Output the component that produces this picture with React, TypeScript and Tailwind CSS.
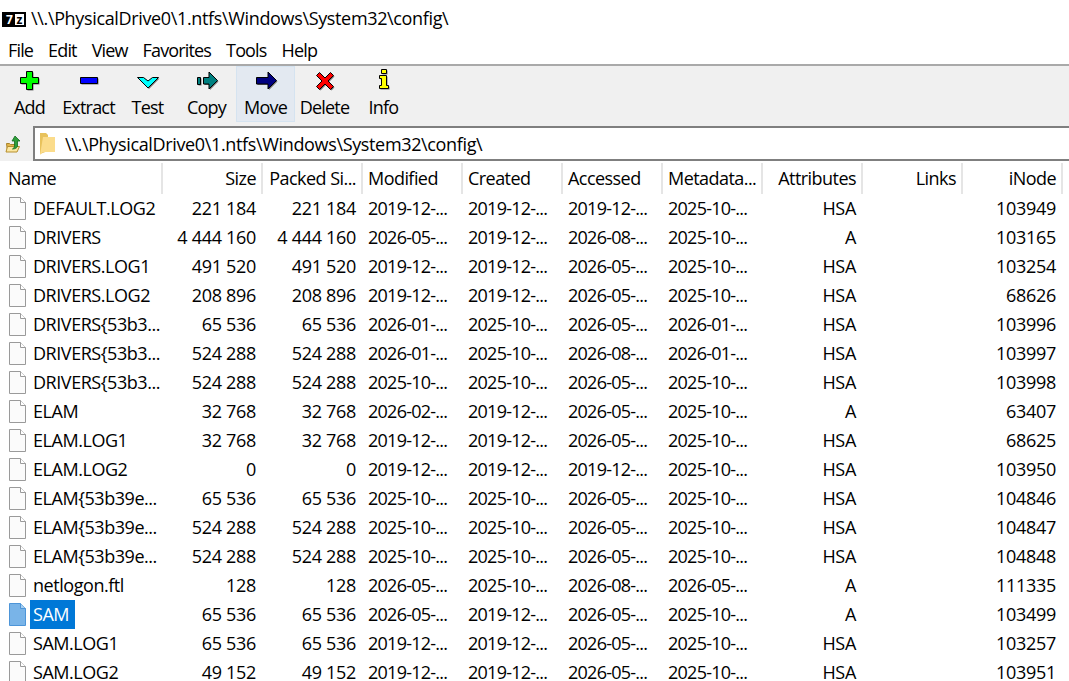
import React from 'react';

type Row = [string, string, string, string, string, string, string, string, string];

const D19 = '2019-12-...';
const D25 = '2025-10-...';
const M26 = '2026-05-...';
const A26 = '2026-08-...';
const J26 = '2026-01-...';
const F26 = '2026-02-...';

const rows: Row[] = [
  ['DEFAULT.LOG2', '221 184', '221 184', D19, D19, D19, D25, 'HSA', '103949'],
  ['DRIVERS', '4 444 160', '4 444 160', M26, D19, A26, D25, 'A', '103165'],
  ['DRIVERS.LOG1', '491 520', '491 520', D19, D19, M26, D25, 'HSA', '103254'],
  ['DRIVERS.LOG2', '208 896', '208 896', D19, D19, M26, D25, 'HSA', '68626'],
  ['DRIVERS{53b3...', '65 536', '65 536', J26, D25, M26, J26, 'HSA', '103996'],
  ['DRIVERS{53b3...', '524 288', '524 288', J26, D25, A26, J26, 'HSA', '103997'],
  ['DRIVERS{53b3...', '524 288', '524 288', D25, D25, M26, D25, 'HSA', '103998'],
  ['ELAM', '32 768', '32 768', F26, D19, M26, D25, 'A', '63407'],
  ['ELAM.LOG1', '32 768', '32 768', D19, D19, M26, D25, 'HSA', '68625'],
  ['ELAM.LOG2', '0', '0', D19, D19, D19, D25, 'HSA', '103950'],
  ['ELAM{53b39e...', '65 536', '65 536', D25, D25, M26, D25, 'HSA', '104846'],
  ['ELAM{53b39e...', '524 288', '524 288', D25, D25, M26, D25, 'HSA', '104847'],
  ['ELAM{53b39e...', '524 288', '524 288', D25, D25, M26, D25, 'HSA', '104848'],
  ['netlogon.ftl', '128', '128', M26, D25, A26, M26, 'A', '111335'],
  ['SAM', '65 536', '65 536', M26, D19, M26, D25, 'A', '103499'],
  ['SAM.LOG1', '65 536', '65 536', D19, D19, M26, D25, 'HSA', '103257'],
  ['SAM.LOG2', '49 152', '49 152', D19, D19, M26, D25, 'HSA', '103951'],
];

const headers = [
  'Size',
  'Packed Si...',
  'Modified',
  'Created',
  'Accessed',
  'Metadata...',
  'Attributes',
  'Links',
  'iNode',
];

const leftAligned = new Set([2, 3, 4, 5]);

// toolbar glyph: the same outline drawn twice, grey offset copy as the drop shadow
const Glyph: React.FC<{ d: string; fill: string }> = ({ d, fill }) => (
  <svg width="26" height="24" viewBox="0 0 26 24">
    <path d={d} fill="#777" transform="translate(1 1)" />
    <path d={d} fill={fill} stroke="#000" strokeWidth="1" />
  </svg>
);

const tools: { label: string; icon: React.ReactNode }[] = [
  { label: 'Add', icon: <Glyph fill="#00ff00" d="M9.500 3.500h6v6h6v6h-6v6h-6v-6h-6v-6h6z" /> },
  { label: 'Extract', icon: <Glyph fill="#0000ff" d="M4.500 9.500h17v6h-17z" /> },
  { label: 'Test', icon: <Glyph fill="#00ffff" d="M2.500 9.500h6l4.500 3.500 4.500-3.500h6L13 20z" /> },
  {
    label: 'Copy',
    icon: <Glyph fill="#008080" d="M3.500 9.500h3v7h-3zM9.500 9.500h5.500v-5.500l8.500 8.500-8.500 8.500v-5h-5.500z" />,
  },
  { label: 'Move', icon: <Glyph fill="#000080" d="M3.500 9.500h11.500v-5.500l8.500 8.500-8.500 8.500v-5H3.500z" /> },
  {
    label: 'Delete',
    icon: (
      <Glyph
        fill="#ff0000"
        d="M7.500 4.500l5.500 5.500 5.500-5.500 3 3-5.500 5.500 5.500 5.500-3 3-5.500-5.500-5.500 5.500-3-3 5.500-5.500-5.500-5.500z"
      />
    ),
  },
  {
    label: 'Info',
    icon: <Glyph fill="#ffff00" d="M10.500 1.500h5v4h-5zM8.500 7.500h7v10h2v3h-9v-3h2v-7h-2z" />,
  },
];

const FileIcon: React.FC<{ selected?: boolean }> = ({ selected }) => (
  <svg width="17" height="23" viewBox="0 0 17 23" className="shrink-0">
    <path
      d="M.5.500h11l5 5v17H.5z"
      fill={selected ? '#79b4e8' : '#fbfbfb'}
      stroke={selected ? '#4d95d8' : '#9a9a9a'}
    />
    <path d="M11.500.500v5h5" fill={selected ? '#a8cff0' : '#fff'} stroke={selected ? '#4d95d8' : '#9a9a9a'} />
  </svg>
);

export default function App() {
  return (
    <div
      className="h-[681px] w-[1069px] overflow-hidden bg-white text-[18px] text-black"
      style={{ fontFamily: '"Open Sans", "Noto Sans", sans-serif' }}
    >
      {/* Title bar */}
      <div className="flex h-[36px] items-center">
        <div className="mt-[3px] ml-[2px] flex h-[15px] w-[24px] items-stretch border-2 border-black bg-white">
          <span className="flex w-[11px] items-center justify-center bg-black text-[12px] leading-[11px] font-bold text-white">
            7
          </span>
          <span className="flex flex-1 items-center justify-center text-[12px] leading-[11px] font-bold">z</span>
        </div>
        <span className="ml-[5px] tracking-[-0.35px]">\\.\PhysicalDrive0\1.ntfs\Windows\System32\config\</span>
      </div>

      {/* Menu */}
      <div className="flex h-[28px] items-center gap-[15px] pl-[8px] tracking-[-0.85px]">
        {['File', 'Edit', 'View', 'Favorites', 'Tools', 'Help'].map((m) => (
          <span key={m}>{m}</span>
        ))}
      </div>

      {/* Toolbar */}
      <div className="flex h-[62px] items-start border-t-[2px] border-[#a9a9a9] bg-[#f0f0f0]">
        {tools.map((t) => (
          <div
            key={t.label}
            className={`flex h-[56px] w-[59px] flex-col items-center border pt-[1px] tracking-[-0.8px] ${
              t.label === 'Move' ? 'border-[#d5e3f0] bg-[#e3e9f1]' : 'border-transparent'
            }`}
          >
            {t.icon}
            <span className="mt-[4px] leading-[23px]">{t.label}</span>
          </div>
        ))}
      </div>

      {/* Address bar */}
      <div className="flex h-[35px] bg-[#f0f0f0]">
        <div className="flex w-[33px] items-center pl-[5px]">
          <svg width="16" height="18" viewBox="0 0 16 18">
            <path d="M1.500 8.500h3l1 1h6v7h-9z" fill="#e3b64b" stroke="#a8842c" />
            <path d="M2.500 11.500h12l-2.500 5.500H1z" fill="#fbe7a1" stroke="#b78f2e" />
            <path d="M10 1l5 5h-2.500v5c0 1.500-2 3-5 3 1.500-1 2-2 2-3V6H7z" fill="#2f9e3a" stroke="#146b20" strokeWidth="0.8" />
          </svg>
        </div>
        <div className="flex flex-1 items-center border-t-[2px] border-b-[2px] border-l-[2px] border-[#7f7f7f] bg-white pl-[5px] tracking-[-0.35px]">
          <svg width="15" height="22" viewBox="0 0 15 22" className="shrink-0">
            <path d="M0 0h6l2 2v16l-8 3z" fill="#e8c25c" />
            <path d="M3 4h12v15H3l-3 3z" fill="#fbdc8b" />
          </svg>
          <span className="mt-[1px] ml-[10px]">\\.\PhysicalDrive0\1.ntfs\Windows\System32\config\</span>
        </div>
      </div>

      {/* Column headers */}
      <div className="grid h-[33px] grid-cols-[163px_repeat(9,100px)] items-center pt-[2px] tracking-[-0.55px]">
        <div className="flex h-[31px] items-center border-r-2 border-[#e5e5e5] pl-[8px]">Name</div>
        {headers.map((h, i) => (
          <div
            key={h}
            className={`flex h-[31px] items-center border-r-2 border-[#e5e5e5] px-[5px] ${
              leftAligned.has(i) ? 'justify-start' : 'justify-end'
            }`}
          >
            {h}
          </div>
        ))}
      </div>

      {/* File rows */}
      <div>
        {rows.map((row, idx) => {
          const selected = row[0] === 'SAM';
          return (
            <div key={idx} className="grid h-[29px] grid-cols-[161px_repeat(8,100px)_100px] items-center">
              <div className="flex h-[29px] items-center pl-[9px] tracking-[-0.45px]">
                <FileIcon selected={selected} />
                <span
                  className={`ml-[4px] flex h-[29px] items-center pr-[6px] pl-[3px] ${
                    selected ? 'bg-[#0078d7] text-white' : ''
                  }`}
                >
                  {row[0]}
                </span>
              </div>
              <div className="pr-[5px] text-right tracking-[-0.3px]">{row[1]}</div>
              <div className="pr-[5px] text-right tracking-[-0.3px]">{row[2]}</div>
              <div className="pl-[7px] tracking-[-0.75px]">{row[3]}</div>
              <div className="pl-[7px] tracking-[-0.75px]">{row[4]}</div>
              <div className="pl-[7px] tracking-[-0.75px]">{row[5]}</div>
              <div className="pl-[7px] tracking-[-0.75px]">{row[6]}</div>
              <div className="pr-[5px] text-right tracking-[-0.3px]">{row[7]}</div>
              <div />
              <div className="pr-[5px] text-right tracking-[-0.3px]">{row[8]}</div>
            </div>
          );
        })}
      </div>
    </div>
  );
}
